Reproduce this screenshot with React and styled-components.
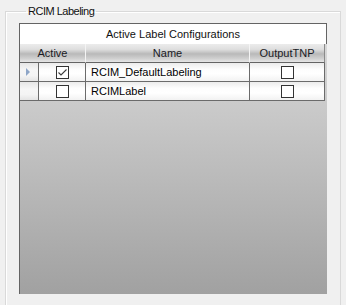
import React from 'react';
import styled, { createGlobalStyle } from 'styled-components';

const GlobalStyle = createGlobalStyle`
  html, body {
    margin: 0;
    padding: 0;
    background: #f0f0f0;
    overflow: hidden;
  }
  body {
    font-family: "Liberation Sans", Arial, sans-serif;
    font-size: 11px;
    color: #000;
  }
`;

const Page = styled.div`
  width: 346px;
  height: 305px;
  padding: 3px 0 0 5px;
  box-sizing: border-box;
  overflow: hidden;
`;

const GroupBox = styled.fieldset`
  margin: 0;
  width: 336px;
  height: 306px;
  box-sizing: border-box;
  border: 1px solid #d9d9d9;
  box-shadow: inset 1px 1px 0 #fff;
  padding: 4px 0 0 13px;
  min-inline-size: 0;
`;

const Legend = styled.legend`
  margin-left: 7px;
  padding: 0 2px;
  line-height: 16px;
  font-size: 11px;
  letter-spacing: -0.5px;
  color: #111;
`;

const GridFrame = styled.div`
  width: 308px;
  height: 271px;
  box-sizing: border-box;
  border-left: 1px solid #646464;
  border-top: 1px solid #646464;
  background: linear-gradient(#dcdcdc, #a1a1a1);
  display: flex;
  flex-direction: column;
`;

const TitleRow = styled.div`
  height: 20px;
  line-height: 20px;
  background: #fff;
  border-right: 1px solid #646464;
  text-align: center;
  color: #111;
`;

const Table = styled.div`
  display: grid;
  grid-template-columns: 19px 47px 164px 75px;
  grid-auto-rows: 19px;
  width: 305px;
`;

const HeaderCell = styled.div`
  grid-column: ${p => (p.$span ? `span ${p.$span}` : 'auto')};
  box-sizing: border-box;
  border-bottom: 1px solid #646464;
  border-right: 1px solid ${p => (p.$last ? '#8a8a8a' : '#f4f4f4')};
  background: linear-gradient(#ececec 0%, #dedede 30%, #b9b9b9 55%, #cfcfcf 80%, #e6e6e6 100%);
  line-height: 18px;
  text-align: center;
  color: #1a1a24;
`;

const Cell = styled.div`
  box-sizing: border-box;
  border-right: 1px solid #6b6b6b;
  border-bottom: 1px solid #6b6b6b;
  background: linear-gradient(#ececec 0%, #fdfdfd 35%, #ffffff 60%, #f2f2f2 100%);
  display: flex;
  align-items: center;
  justify-content: ${p => (p.$left ? 'flex-start' : 'center')};
  padding-left: ${p => (p.$left ? '5px' : '0')};
  line-height: 18px;
  white-space: nowrap;
`;

const RowHeader = styled(Cell)`
  justify-content: flex-start;
  padding-left: 6px;
  background: linear-gradient(#e6e6e6 0%, #f6f6f6 40%, #f4f4f4 70%, #e4e4e4 100%);
`;

const Pointer = styled.span`
  width: 0;
  height: 0;
  border-left: 4px solid #8ea6c8;
  border-top: 4px solid transparent;
  border-bottom: 4px solid transparent;
`;

const Box = styled.span`
  width: 13px;
  height: 13px;
  box-sizing: border-box;
  border: 1px solid #333;
  background: #fff;
  display: flex;
  align-items: center;
  justify-content: center;
`;

function CheckBox({ checked }) {
  return (
    <Box>
      {checked && (
        <svg width="11" height="11" viewBox="0 0 11 11">
          <polyline points="1.5,5.5 4,8 9.5,2.5" fill="none" stroke="#3c3c3c" strokeWidth="1.1" />
        </svg>
      )}
    </Box>
  );
}

const rows = [
  { name: 'RCIM_DefaultLabeling', active: true, output: false, current: true },
  { name: 'RCIMLabel', active: false, output: false, current: false },
];

export default function App() {
  return (
    <Page>
      <GlobalStyle />
      <GroupBox>
        <Legend>RCIM Labeling</Legend>
        <GridFrame>
          <TitleRow>Active Label Configurations</TitleRow>
          <Table>
            <HeaderCell $span={2}>Active</HeaderCell>
            <HeaderCell>Name</HeaderCell>
            <HeaderCell $last>OutputTNP</HeaderCell>
            {rows.map(r => (
              <React.Fragment key={r.name}>
                <RowHeader>{r.current && <Pointer />}</RowHeader>
                <Cell><CheckBox checked={r.active} /></Cell>
                <Cell $left>{r.name}</Cell>
                <Cell><CheckBox checked={r.output} /></Cell>
              </React.Fragment>
            ))}
          </Table>
        </GridFrame>
      </GroupBox>
    </Page>
  );
}
